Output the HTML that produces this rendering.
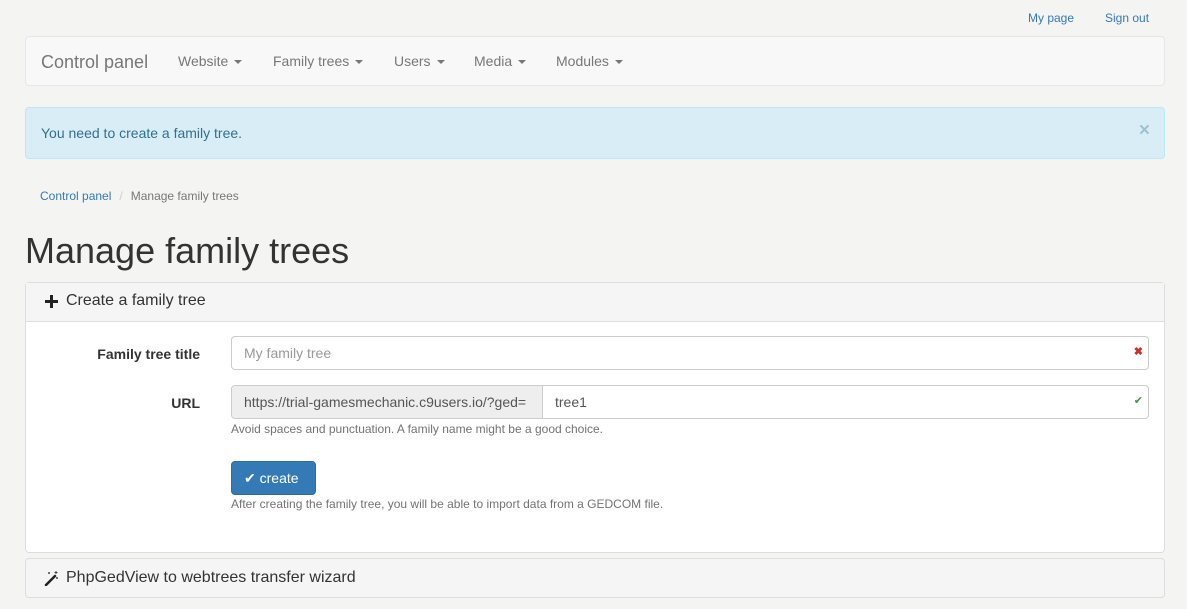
<!DOCTYPE html>
<html><head><meta charset="utf-8"><style>
*{box-sizing:border-box;margin:0;padding:0}
body{width:1187px;height:609px;overflow:hidden;background:#f4f4f2;font-family:"Liberation Sans",sans-serif;color:#333;position:relative;font-size:14px}
.abs{position:absolute}
.top a{color:#337ab7;font-size:12px;text-decoration:none}
.nav{left:25px;top:36px;width:1140px;height:50px;background:#f8f8f8;border:1px solid #e7e7e7;border-radius:4px}
.nav span{position:absolute;top:16px;color:#777;font-size:14px}
.car{display:inline-block;width:0;height:0;border-left:4px solid transparent;border-right:4px solid transparent;border-top:4px solid #777;vertical-align:middle;margin-left:6px}
.alert{left:25px;top:107px;width:1140px;height:52px;background:#d9edf7;border:1px solid #bce8f1;border-radius:4px;color:#31708f}
.panel{left:25px;top:282px;width:1140px;height:271px;background:#fff;border:1px solid #ddd;border-radius:4px}
.ph{height:39px;background:#f5f5f5;border-bottom:1px solid #ddd;font-size:16px;padding:9px 0 0 40px;position:relative}
.lbl{font-weight:bold;font-size:14px;text-align:right;width:174px}
.inp{border:1px solid #ccc;border-radius:4px;background:#fff;height:34px}
.help{color:#737373;font-size:12px}
</style></head><body>
<div class="abs top" style="left:1028px;top:9px"><a>My page</a></div>
<div class="abs top" style="left:1105px;top:9px"><a>Sign out</a></div>
<div class="abs nav">
<span style="left:15px;top:15px;font-size:18px">Control panel</span>
<span style="left:152px">Website<i class="car"></i></span>
<span style="left:247px">Family trees<i class="car"></i></span>
<span style="left:368px">Users<i class="car"></i></span>
<span style="left:448px">Media<i class="car"></i></span>
<span style="left:530px">Modules<i class="car"></i></span>
</div>
<div class="abs alert"><span class="abs" style="left:15px;top:17px">You need to create a family tree.</span><span class="abs" style="right:14px;top:12px;font-weight:bold;font-size:19px;color:#9fc2d3">×</span></div>
<div class="abs" style="left:40px;top:189px;font-size:12px"><span style="color:#337ab7">Control panel</span><span style="color:#ccc;padding:0 8px">/</span><span style="color:#777">Manage family trees</span></div>
<div class="abs" style="left:25px;top:230px;font-size:36px;color:#333">Manage family trees</div>
<div class="abs panel">
<div class="ph"><svg class="abs" style="left:19px;top:12px" width="13" height="13" viewBox="0 0 13 13"><path d="M5 0h3v5h5v3H8v5H5V8H0V5h5z" fill="#222"/></svg>Create a family tree</div>
<div class="abs lbl" style="left:0;top:63px">Family tree title</div>
<div class="abs inp" style="left:205px;top:53px;width:918px"><span class="abs" style="left:12px;top:8px;color:#999">My family tree</span><span class="abs" style="right:5px;top:8px;color:#c9302c;font-size:11px;font-weight:bold">✖</span></div>
<div class="abs lbl" style="left:0;top:112px">URL</div>
<div class="abs inp" style="left:205px;top:102px;width:918px;overflow:hidden">
<div class="abs" style="left:0;top:0;width:311px;height:32px;background:#eee;border-right:1px solid #ccc"></div>
<span class="abs" style="left:12px;top:8px;color:#555">https://trial-gamesmechanic.c9users.io/?ged=</span>
<span class="abs" style="left:323px;top:8px;color:#555">tree1</span>
<span class="abs" style="right:5px;top:8px;color:#3c9a3c;font-size:11px">✔</span></div>
<div class="abs help" style="left:205px;top:139px">Avoid spaces and punctuation. A family name might be a good choice.</div>
<div class="abs" style="left:205px;top:178px;width:85px;height:34px;background:#337ab7;border:1px solid #2e6da4;border-radius:4px;color:#fff;padding:8px 0 0 12px">✔ create</div>
<div class="abs help" style="left:205px;top:214px">After creating the family tree, you will be able to import data from a GEDCOM file.</div>
</div>
<div class="abs" style="left:25px;top:558px;width:1140px;height:40px;background:#f5f5f5;border:1px solid #ddd;border-radius:4px;font-size:16px;padding:10px 0 0 40px"><svg class="abs" style="left:18px;top:12px" width="15" height="15" viewBox="0 0 15 15"><path d="M2 14L11 5" stroke="#222" stroke-width="2.5" stroke-linecap="round"/><path d="M12 0v3M10.5 1.5h3M5 1v2M4 2h2M13 6v2M12 7h2" stroke="#444" stroke-width="1"/></svg>PhpGedView to webtrees transfer wizard</div>
</body></html>
